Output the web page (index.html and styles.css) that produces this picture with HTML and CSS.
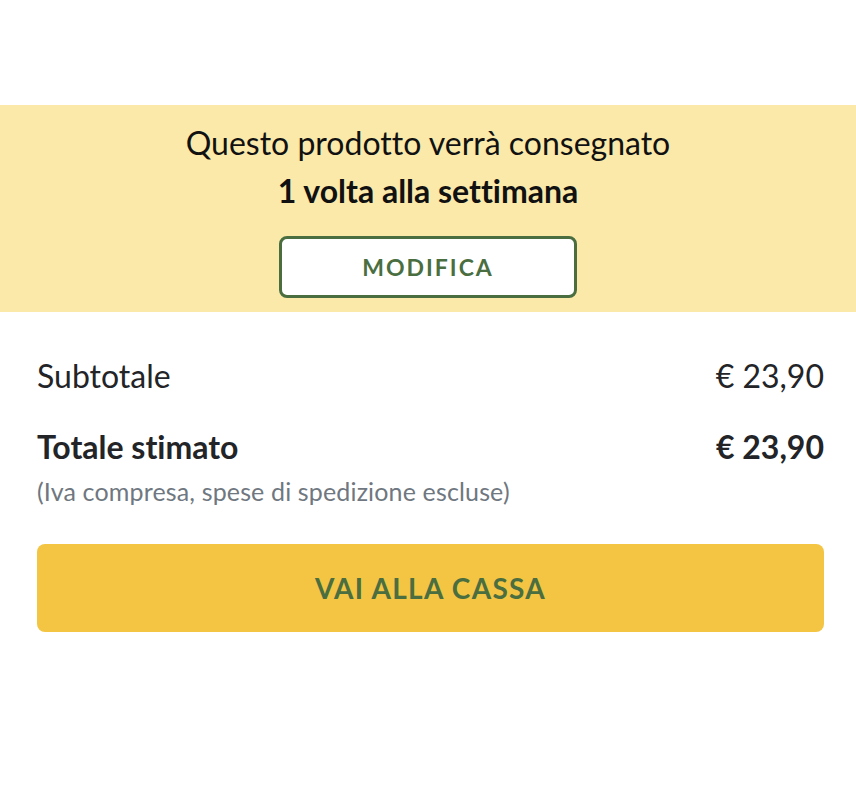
FILE: index.html
```html
<!DOCTYPE html>
<html lang="it">
<head>
<meta charset="utf-8">
<title>Carrello</title>
<link rel="stylesheet" href="styles.css">
</head>
<body>
<div class="page">
  <section class="banner">
    <p class="banner-line">Questo prodotto verrà consegnato</p>
    <p class="banner-line banner-strong">1 volta alla settimana</p>
    <button class="btn-outline" type="button">MODIFICA</button>
  </section>
  <section class="summary">
    <div class="row">
      <span>Subtotale</span>
      <span>€ 23,90</span>
    </div>
    <div class="row row-total">
      <span>Totale stimato</span>
      <span>€ 23,90</span>
    </div>
    <p class="note">(Iva compresa, spese di spedizione escluse)</p>
    <button class="btn-primary" type="button">VAI ALLA CASSA</button>
  </section>
</div>
</body>
</html>
```

FILE: styles.css
```css
* { box-sizing: border-box; }
html, body { margin: 0; padding: 0; background: #fff; }
body {
  font-family: Lato, "Noto Sans", sans-serif;
  font-variant-ligatures: none;
  color: #222427;
  width: 856px;
  height: 790px;
  overflow: hidden;
}
.page { padding-top: 105px; }
.banner {
  background: #fbe9aa;
  display: flex;
  flex-direction: column;
  align-items: center;
  padding: 14px 0 14px;
}
.banner-line {
  margin: 0;
  font-size: 32px;
  line-height: 48px;
  color: #111;
}
.banner-strong { font-weight: 700; }
.btn-outline {
  margin-top: 21px;
  width: 298px;
  height: 62px;
  background: #fff;
  border: 3px solid #4a6e40;
  border-radius: 8px;
  font-family: inherit;
  font-variant-ligatures: none;
  font-size: 23px;
  font-weight: 700;
  letter-spacing: 2px;
  color: #4a6e40;
  padding: 0;
}
.summary {
  padding: 45px 32px 0 37px;
  display: flex;
  flex-direction: column;
}
.row {
  display: flex;
  justify-content: space-between;
  font-size: 32px;
  line-height: 38px;
}
.row-total {
  margin-top: 33px;
  font-weight: 700;
}
.note {
  margin: 10px 0 0;
  font-size: 25px;
  line-height: 30px;
  letter-spacing: 0.15px;
  color: #6f7780;
}
.btn-primary {
  margin-top: 38px;
  height: 88px;
  width: 100%;
  border: none;
  border-radius: 8px;
  background: #f3c543;
  font-family: inherit;
  font-variant-ligatures: none;
  font-size: 28px;
  font-weight: 700;
  letter-spacing: 1.3px;
  color: #4a6e40;
  padding: 0;
}
```
